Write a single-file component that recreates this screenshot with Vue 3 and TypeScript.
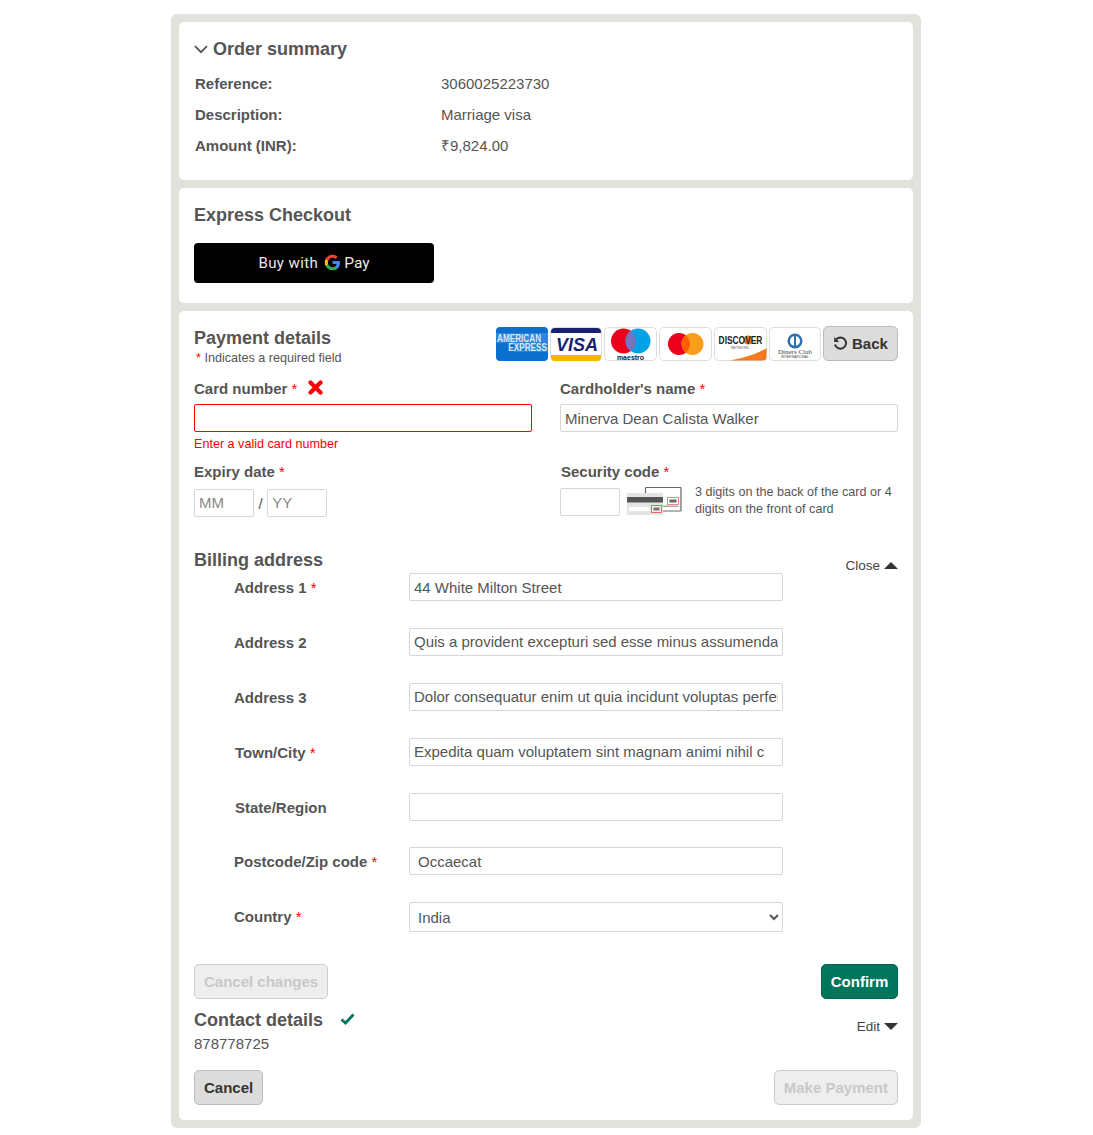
<template>
  <div class="page">
    <section class="card summary">
      <h2 class="summary-title">
        <svg class="chevron" width="14" height="9" viewBox="0 0 14 9"><path d="M1 1.200l6 6 6-6" fill="none" stroke="#555" stroke-width="1.800" /></svg>
        Order summary
      </h2>
      <div v-for="row in summaryRows" :key="row.label" class="summary-row">
        <span class="summary-label">{{ row.label }}</span>
        <span>{{ row.value }}</span>
      </div>
    </section>

    <section class="card express">
      <h2>Express Checkout</h2>
      <button class="gpay" type="button">
        <span>Buy with</span>
        <svg class="g-mark" width="17" height="17" viewBox="0 0 24 24">
          <path fill="#4285F4" d="M22.56 12.25c0-.78-.07-1.53-.2-2.25H12v4.26h5.92c-.26 1.37-1.04 2.53-2.21 3.31v2.77h3.57c2.08-1.92 3.28-4.74 3.28-8.09z" />
          <path fill="#34A853" d="M12 23c2.97 0 5.46-.98 7.28-2.66l-3.57-2.77c-.98.66-2.23 1.06-3.71 1.06-2.86 0-5.29-1.93-6.16-4.53H2.18v2.84C3.99 20.53 7.7 23 12 23z" />
          <path fill="#FBBC05" d="M5.84 14.09c-.22-.66-.35-1.36-.35-2.09s.13-1.43.35-2.09V7.07H2.18C1.43 8.55 1 10.22 1 12s.43 3.45 1.18 4.93l2.85-2.22.81-.62z" />
          <path fill="#EA4335" d="M12 5.38c1.62 0 3.06.56 4.21 1.64l3.15-3.15C17.45 2.09 14.97 1 12 1 7.7 1 3.99 3.47 2.18 7.07l3.66 2.84c.87-2.6 3.3-4.53 6.16-4.53z" />
        </svg>
        <span class="pay-word">Pay</span>
      </button>
    </section>

    <section class="card payment">
      <div class="payment-head">
        <div>
          <h2>Payment details</h2>
          <p class="required-note"><i>*</i> Indicates a required field</p>
        </div>
        <div class="head-right">
          <svg class="logo" width="52" height="34" viewBox="0 0 52 34">
            <rect width="52" height="34" rx="4" fill="#0b6fce" />
            <rect y="6" width="52" height="10" fill="#2f86d8" />
            <rect x="18" y="16" width="34" height="9" fill="#2f86d8" />
            <text x="1" y="12" transform="scale(1 1.250)" class="amex">AMERICAN</text>
            <text x="51" y="19.600" transform="scale(1 1.250)" class="amex end">EXPRESS</text>
          </svg>
          <svg class="logo" width="52" height="34" viewBox="0 0 52 34">
            <rect x=".5" y=".5" width="51" height="33" rx="4" fill="#fff" stroke="#ddd" />
            <path d="M1 5a4 4 0 0 1 4-4h42a4 4 0 0 1 4 4v1H1z" fill="#1a1f71" />
            <path d="M1 28h50v2a4 4 0 0 1-4 4H5a4 4 0 0 1-4-4z" fill="#f7b600" />
            <text x="27" y="23.500" class="visa">VISA</text>
          </svg>
          <svg class="logo" width="53" height="34" viewBox="0 0 53 34">
            <rect x=".5" y=".5" width="52" height="33" rx="4" fill="#fff" stroke="#ddd" />
            <circle cx="19.500" cy="14" r="12.500" fill="#eb001b" />
            <circle cx="34" cy="14" r="12.500" fill="#00a2e5" />
            <path d="M26.750 3.800A12.500 12.500 0 0 1 26.750 24.200 12.500 12.500 0 0 1 26.750 3.800z" fill="#7673c0" />
            <text x="26.500" y="32.500" class="small-mark">maestro</text>
          </svg>
          <svg class="logo" width="53" height="34" viewBox="0 0 53 34">
            <rect x=".5" y=".5" width="52" height="33" rx="4" fill="#fff" stroke="#ddd" />
            <circle cx="20" cy="17" r="11" fill="#eb001b" />
            <circle cx="33.500" cy="17" r="11" fill="#f79e1b" />
            <path d="M26.750 8.320A11 11 0 0 1 26.750 25.680 11 11 0 0 1 26.750 8.320z" fill="#ff5f00" />
          </svg>
          <svg class="logo" width="53" height="34" viewBox="0 0 53 34">
            <rect x=".5" y=".5" width="52" height="33" rx="4" fill="#fff" stroke="#ddd" />
            <path d="M52.500 21v9a3.500 3.500 0 0 1-3.500 3.500H16C30 31 44 27 52.500 21z" fill="#f4791f" />
            <circle cx="34" cy="13" r="4.500" fill="#f4791f" />
            <text x="26.500" y="13.600" transform="scale(1 1.250)" class="discover">DISCOVER</text>
            <text x="26" y="22" class="network">NETWORK</text>
          </svg>
          <svg class="logo" width="52" height="34" viewBox="0 0 52 34">
            <rect x=".5" y=".5" width="51" height="33" rx="4" fill="#fff" stroke="#ddd" />
            <circle cx="26" cy="14" r="7.500" fill="#2f6fb0" />
            <circle cx="26" cy="14" r="5" fill="#fff" />
            <rect x="25" y="9" width="2" height="10" fill="#2f6fb0" />
            <text x="26" y="27" class="diners">Diners Club</text>
            <text x="26" y="31" class="diners-small">INTERNATIONAL</text>
          </svg>
          <button class="btn back-btn" type="button">
            <svg width="15" height="15" viewBox="0 0 15 15"><path d="M3.200 3.400A5.600 5.600 0 1 1 2 8.500" fill="none" stroke="#333" stroke-width="2" /><path d="M1.200 1v5h5z" fill="#333" /></svg>
            Back
          </button>
        </div>
      </div>

      <div class="card-fields">
        <div class="field">
          <label class="field-label">Card number <i>*</i><svg class="cross" width="15" height="15" viewBox="0 0 15 15"><path d="M2.500 2.500l10 10M12.500 2.500l-10 10" stroke="#f00" stroke-width="4.200" stroke-linecap="round" /></svg></label>
          <input class="text-input invalid" type="text" />
          <p class="error">Enter a valid card number</p>
        </div>
        <div class="field">
          <label class="field-label">Cardholder's name <i>*</i></label>
          <input class="text-input" type="text" value="Minerva Dean Calista Walker" />
        </div>
        <div class="field expiry">
          <label class="field-label">Expiry date <i>*</i></label>
          <div class="expiry-inputs">
            <input class="text-input short" type="text" placeholder="MM" />
            <span>/</span>
            <input class="text-input short" type="text" placeholder="YY" />
          </div>
        </div>
        <div class="field security">
          <label class="field-label">Security code <i>*</i></label>
          <div class="security-inputs">
            <input class="text-input short" type="text" />
            <svg width="55" height="29" viewBox="0 0 55 29">
              <rect x="18.500" y=".5" width="35.500" height="23.500" rx="1" fill="#fff" stroke="#666" stroke-width="1.200" />
              <rect x="40.500" y="10.500" width="11" height="7" fill="#fff" stroke="#e88" />
              <rect x="42.500" y="12.500" width="7" height="3" fill="#666" />
              <rect x="36" y="18.500" width="15" height="1.500" fill="#aaa" />
              <rect y="6" width="36" height="22" fill="#e4e4e2" />
              <rect y="10" width="36" height="5.500" fill="#555" />
              <rect x="2" y="20" width="21" height="4" fill="#fff" />
              <rect x="24.500" y="18.500" width="10" height="7" fill="#eee" stroke="#e66" />
              <rect x="26.500" y="20.500" width="6" height="3" fill="#777" />
            </svg>
            <p class="hint">3 digits on the back of the card or 4 digits on the front of card</p>
          </div>
        </div>
      </div>

      <div class="billing-head">
        <h2>Billing address</h2>
        <a class="toggle close-link">Close <span class="tri up"></span></a>
      </div>
      <div class="billing-rows">
        <div v-for="row in addressRows" :key="row.label" class="billing-row">
          <label class="field-label">{{ row.label }} <i v-if="row.required">*</i></label>
          <input class="text-input" :class="{ indented: row.label.startsWith('Postcode') }" type="text" :value="row.value" />
        </div>
        <div class="billing-row">
          <label class="field-label">Country <i>*</i></label>
          <select class="text-input select-input">
            <option>India</option>
          </select>
        </div>
      </div>

      <div class="actions confirm-row">
        <button class="btn disabled" type="button">Cancel changes</button>
        <button class="btn confirm" type="button">Confirm</button>
      </div>

      <div class="contact">
        <div>
          <h2>Contact details
            <svg class="check" width="15" height="12" viewBox="0 0 15 12"><path d="M1.500 6.500l4 3.500 8-8.500" fill="none" stroke="#00755e" stroke-width="2.800" /></svg>
          </h2>
          <p class="phone">878778725</p>
        </div>
        <a class="toggle edit-link">Edit <span class="tri down"></span></a>
      </div>

      <div class="actions">
        <button class="btn" type="button">Cancel</button>
        <button class="btn disabled" type="button">Make Payment</button>
      </div>
    </section>
  </div>
</template>

<script setup lang="ts">
interface AddressRow {
  label: string
  value: string
  required: boolean
}

const summaryRows = [
  { label: 'Reference:', value: '3060025223730' },
  { label: 'Description:', value: 'Marriage visa' },
  { label: 'Amount (INR):', value: '₹9,824.00' },
]

const addressRows: AddressRow[] = [
  { label: 'Address 1', value: '44 White Milton Street', required: true },
  { label: 'Address 2', value: 'Quis a provident excepturi sed esse minus assumenda', required: false },
  { label: 'Address 3', value: 'Dolor consequatur enim ut quia incidunt voluptas perferendis', required: false },
  { label: 'Town/City', value: 'Expedita quam voluptatem sint magnam animi nihil c', required: true },
  { label: 'State/Region', value: '', required: false },
  { label: 'Postcode/Zip code', value: 'Occaecat', required: true },
]
</script>

<style>
html,
body {
  margin: 0;
  background: #fff;
}
</style>

<style scoped>
.page {
  width: 734px;
  margin: 14px 0 7px 171px;
  padding: 8px;
  display: flex;
  flex-direction: column;
  gap: 8px;
  background: #e2e2dc;
  border-radius: 6px;
  font-family: "Liberation Sans", Arial, sans-serif;
  font-size: 15px;
  color: #555;
}
.card {
  background: #fff;
  border-radius: 5px;
  padding: 15px;
}
h2 {
  margin: 0;
  font-size: 18px;
  line-height: 24px;
  font-weight: 700;
  color: #555;
}
.summary {
  height: 158px;
  box-sizing: border-box;
}
.summary-title {
  display: flex;
  align-items: center;
  gap: 5px;
  margin-bottom: 7px;
}
.chevron {
  margin-top: 1px;
}
.summary-row {
  display: grid;
  grid-template-columns: 246px 1fr;
  height: 31px;
  line-height: 31px;
  padding-left: 1px;
}
.summary-row span {
  height: 31px;
}
.summary-label {
  font-weight: 700;
}
.express {
  height: 115px;
  box-sizing: border-box;
}
.gpay {
  display: flex;
  align-items: center;
  justify-content: center;
  gap: 6px;
  width: 240px;
  height: 40px;
  margin-top: 16px;
  border: 0;
  border-radius: 4px;
  background: #000;
  color: #e8e8e8;
  font-family: Roboto, sans-serif;
  font-size: 15px;
  letter-spacing: .4px;
}
.g-mark {
  margin: -2px -3px 0 0;
}
.pay-word {
  font-size: 15.500px;
  letter-spacing: 0;
}
.payment {
  height: 809px;
  box-sizing: border-box;
}
.payment-head {
  display: flex;
  justify-content: space-between;
}
.required-note {
  margin: 0;
  padding-left: 2px;
  font-size: 12.600px;
  line-height: 17px;
}
i {
  font-style: normal;
  font-weight: 400;
  color: #f00;
}
.head-right {
  display: flex;
  align-items: center;
  gap: 2px;
  height: 35px;
}
.logo text {
  font-family: "Liberation Sans", Arial, sans-serif;
}
.amex {
  font-size: 8.200px;
  font-weight: 700;
  fill: #d8e9fa;
}
.amex.end {
  text-anchor: end;
}
.visa {
  font-size: 18px;
  font-weight: 700;
  font-style: italic;
  fill: #1a1f71;
  text-anchor: middle;
}
.small-mark {
  font-size: 7px;
  font-weight: 700;
  fill: #222;
  text-anchor: middle;
}
.discover {
  font-size: 8.400px;
  font-weight: 700;
  fill: #222;
  text-anchor: middle;
}
.network {
  font-size: 3.500px;
  fill: #555;
  text-anchor: middle;
}
.logo .diners {
  font-family: "Liberation Serif", serif;
  font-size: 7px;
  fill: #444;
  text-anchor: middle;
}
.diners-small {
  font-size: 3.500px;
  fill: #444;
  text-anchor: middle;
}
.btn {
  height: 35px;
  padding: 0 9px;
  border: 1px solid #bbb;
  border-radius: 5px;
  background: #dcdcdc;
  color: #333;
  font-family: "Liberation Sans", Arial, sans-serif;
  font-size: 15px;
  font-weight: 700;
  white-space: nowrap;
}
.back-btn {
  display: flex;
  align-items: center;
  gap: 4px;
  width: 75px;
}
.card-fields {
  display: grid;
  grid-template-columns: 338px 338px;
  grid-template-rows: 84px 60px;
  column-gap: 28px;
  margin-top: 11px;
}
.field-label {
  display: block;
  font-size: 15px;
  font-weight: 700;
  line-height: 20px;
  color: #555;
}
.field:nth-child(-n + 2) .field-label {
  padding-top: 1px;
}
.card-fields .field:nth-child(-n + 2) .text-input {
  margin-top: 5px;
}
.cross {
  margin-left: 11px;
  vertical-align: -1px;
}
.text-input {
  display: block;
  box-sizing: border-box;
  width: 100%;
  height: 28px;
  padding: 0 4px;
  border: 1px solid #d6d6d6;
  border-radius: 2px;
  background: #fff;
  color: #555;
  font-family: "Liberation Sans", Arial, sans-serif;
  font-size: 15px;
  outline: none;
}
.text-input::placeholder {
  color: #888;
}
.card-fields .text-input {
  margin-top: 6px;
}
.card-fields .invalid {
  border-color: #f00;
}
.error {
  margin: 5px 0 0;
  font-size: 12.600px;
  line-height: 15px;
  color: #f00;
}
.expiry-inputs {
  display: flex;
  align-items: center;
  gap: 4.500px;
}
.card-fields .expiry-inputs .text-input {
  margin-top: 7px;
  padding-bottom: 2px;
}
.expiry-inputs span {
  margin-top: 7px;
}
.text-input.short {
  width: 60px;
  flex: none;
}
.security .field-label {
  padding-left: 1px;
}
.security-inputs {
  display: flex;
  align-items: flex-start;
}
.security-inputs svg {
  margin: 5px 13px 0 7px;
  flex: none;
}
.hint {
  margin: 2px 0 0;
  font-size: 12.600px;
  line-height: 17px;
}
.billing-head {
  display: flex;
  justify-content: space-between;
  margin-top: 26px;
  height: 25px;
}
.toggle {
  display: inline-flex;
  align-items: center;
  gap: 4px;
  height: 18px;
  font-size: 13.500px;
  color: #444;
}
.close-link {
  margin-top: 8px;
}
.tri {
  width: 0;
  height: 0;
  border-left: 7px solid transparent;
  border-right: 7px solid transparent;
}
.tri.up {
  border-bottom: 7px solid #333;
}
.tri.down {
  border-top: 7px solid #333;
}
.billing-row {
  display: grid;
  grid-template-columns: 175px 374px;
  align-items: start;
  height: 55px;
  padding-left: 40px;
}
.billing-row .field-label {
  margin-top: 5px;
}
.billing-row:nth-child(n + 2):nth-child(-n + 4) .text-input {
  padding-bottom: 2px;
}
.billing-row:nth-child(4),
.billing-row:nth-child(5) {
  padding-left: 41px;
  grid-template-columns: 174px 374px;
}
.billing-row:nth-child(5) {
  height: 54px;
}
.billing-row .indented {
  padding-left: 8px;
}
.select-input {
  height: 30px;
}
.actions {
  display: flex;
  justify-content: space-between;
}
.confirm-row {
  margin-top: 7px;
}
.disabled {
  background: #eee;
  border-color: #ccc;
  color: #c8c8c8;
}
.btn.confirm {
  background: #00755e;
  border-color: #00644f;
  color: #fff;
  width: 77px;
  padding: 0;
}
.contact {
  display: flex;
  justify-content: space-between;
  margin-top: 9px;
  height: 62px;
}
.contact h2 {
  display: flex;
  align-items: center;
  gap: 17px;
}
.check {
  margin-top: -3px;
}
.phone {
  margin: 3px 0 0;
  line-height: 18px;
}
.edit-link {
  margin-top: 9px;
}
</style>
